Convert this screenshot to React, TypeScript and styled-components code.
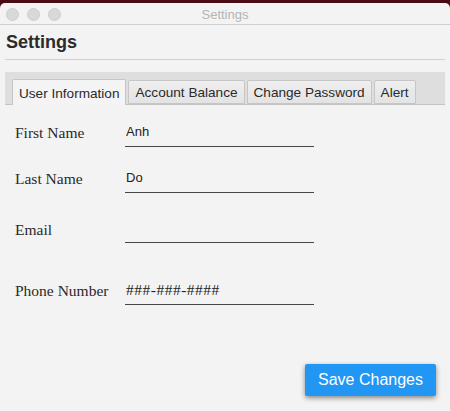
import React from "react";
import styled, { createGlobalStyle } from "styled-components";

const Global = createGlobalStyle`
  html, body { margin: 0; padding: 0; }
  body {
    background: #4a0c12;
    width: 450px;
    height: 411px;
    overflow: hidden;
    font-family: "Liberation Sans", Arial, sans-serif;
  }
`;

const Window = styled.div`
  margin-top: 3px;
  height: 408px;
  background: #f3f3f3;
  border-radius: 5px 5px 0 0;
  display: flex;
  flex-direction: column;
`;

const TitleBar = styled.div`
  position: relative;
  height: 21px;
  border-bottom: 1px solid #cfcfcf;
  display: flex;
  align-items: center;
  justify-content: center;
`;

const Lights = styled.div`
  position: absolute;
  left: 6px;
  top: 5px;
  display: flex;
  gap: 8px;
`;

const Light = styled.span`
  width: 11px;
  height: 11px;
  border-radius: 50%;
  background: #d9d9d9;
  border: 0.5px solid #cdcdcd;
`;

const WindowTitle = styled.span`
  font-size: 13px;
  color: #b4b4b4;
  padding-top: 1px;
`;

const Heading = styled.h1`
  margin: 0 5px;
  height: 34px;
  padding-left: 1px;
  display: flex;
  align-items: center;
  font-size: 18px;
  font-weight: bold;
  color: #2b2b2b;
  border-bottom: 1px solid #d0d0d0;
`;

const TabPane = styled.div`
  margin: 12px 5px 0;
  display: flex;
  flex-direction: column;
  flex: 1;
`;

const TabHeader = styled.div`
  height: 32px;
  background: #dedede;
  border-bottom: 1px solid #c4c4c4;
  display: flex;
  align-items: flex-end;
  gap: 2px;
  padding-left: 7px;
`;

const Tab = styled.div<{ $active?: boolean }>`
  box-sizing: border-box;
  height: ${(p) => (p.$active ? "26px" : "24px")};
  margin-bottom: ${(p) => (p.$active ? "-1px" : "0")};
  padding: 0 6px 0 6px;
  display: flex;
  align-items: center;
  font-size: 13.6px;
  color: #2a2a2a;
  border: 1px solid #c6c6c6;
  border-bottom: ${(p) => (p.$active ? "none" : "1px solid #c6c6c6")};
  border-radius: 2px 2px 0 0;
  background: ${(p) =>
    p.$active ? "#f4f4f4" : "linear-gradient(#efefef, #e3e3e3)"};
  padding-top: ${(p) => (p.$active ? "1px" : "0")};
`;

const Form = styled.div`
  padding: 14px 0 0 10px;
  display: flex;
  flex-direction: column;
`;

const Row = styled.div<{ $gap: number }>`
  display: grid;
  grid-template-columns: 110px 189px;
  align-items: center;
  margin-top: ${(p) => p.$gap}px;
`;

const Label = styled.label<{ $shift?: number }>`
  font-family: "Liberation Serif", "Times New Roman", serif;
  font-size: 15.5px;
  color: #2a2a2a;
  position: relative;
  top: ${(p) => p.$shift ?? 0}px;
`;

const Field = styled.input<{ $serif?: boolean }>`
  box-sizing: border-box;
  height: 28px;
  width: 189px;
  margin: 0;
  padding: 0 1px 2px;
  border: none;
  border-bottom: 1px solid #464646;
  background: transparent;
  outline: none;
  color: #222;
  font-family: ${(p) =>
    p.$serif
      ? `"Liberation Serif", "Times New Roman", serif`
      : `"Liberation Sans", Arial, sans-serif`};
  font-size: ${(p) => (p.$serif ? "15.5px" : "13px")};
  letter-spacing: ${(p) => (p.$serif ? "0.5px" : "0")};
`;

const Footer = styled.div`
  margin-top: auto;
  padding: 0 9px 15px 0;
  display: flex;
  justify-content: flex-end;
`;

const SaveButton = styled.button`
  width: 131px;
  height: 32px;
  border: none;
  border-radius: 2px;
  background: #2196f3;
  color: #fff;
  font-family: "Liberation Sans", Arial, sans-serif;
  font-size: 16px;
  box-shadow: 0 2px 5px rgba(0, 0, 0, 0.45);
  cursor: pointer;
`;

export default function App() {
  return (
    <>
      <Global />
      <Window>
        <TitleBar>
          <Lights>
            <Light />
            <Light />
            <Light />
          </Lights>
          <WindowTitle>Settings</WindowTitle>
        </TitleBar>
        <Heading>Settings</Heading>
        <TabPane>
          <TabHeader>
            <Tab $active>User Information</Tab>
            <Tab>Account Balance</Tab>
            <Tab>Change Password</Tab>
            <Tab>Alert</Tab>
          </TabHeader>
          <Form>
            <Row $gap={0}>
              <Label>First Name</Label>
              <Field defaultValue="Anh" />
            </Row>
            <Row $gap={18}>
              <Label>Last Name</Label>
              <Field defaultValue="Do" />
            </Row>
            <Row $gap={22}>
              <Label $shift={1}>Email</Label>
              <Field />
            </Row>
            <Row $gap={34}>
              <Label>Phone Number</Label>
              <Field $serif defaultValue="###-###-####" />
            </Row>
          </Form>
          <Footer>
            <SaveButton>Save Changes</SaveButton>
          </Footer>
        </TabPane>
      </Window>
    </>
  );
}
